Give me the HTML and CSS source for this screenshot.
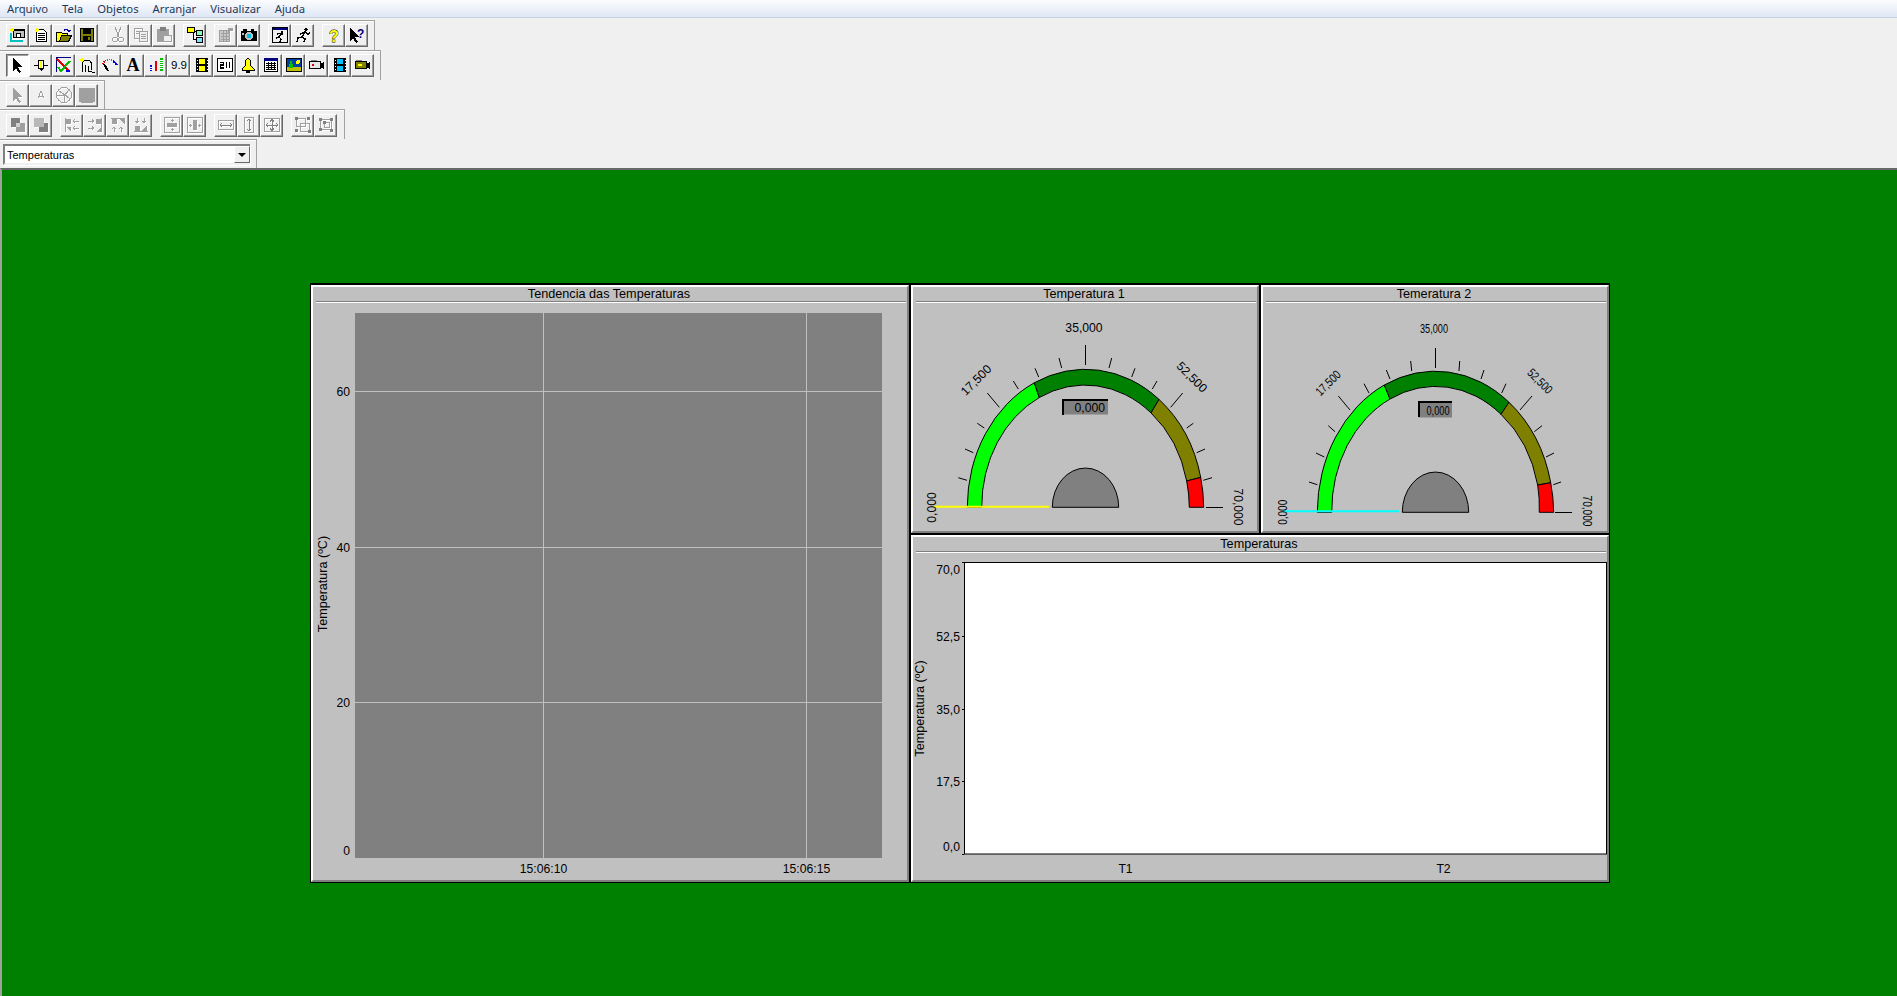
FILE: index.html
```html
<!DOCTYPE html>
<html lang="pt">
<head>
<meta charset="utf-8">
<title>Supervisório</title>
<link rel="stylesheet" href="styles.css">
</head>
<body>
<nav class="menu"><span>Arquivo</span><span>Tela</span><span>Objetos</span><span>Arranjar</span><span>Visualizar</span><span>Ajuda</span></nav>
<header class="toolbars">
  <div class="row">
    <div class="group">
      <button class="btn"><svg class="ico" viewBox="0 0 16 16"><path d="M0 6h2v7h11v2H0z" fill="#00c0c0"/><rect x="2" y="7" width="11" height="6" fill="#fff"/><rect x="3.500" y="2.500" width="11" height="8" fill="#c0c0c0" stroke="#000"/><rect x="3" y="2" width="12" height="2" fill="#000"/><rect x="6.500" y="6.500" width="4" height="4" fill="#fff" stroke="#000"/><path d="M2 0l1 2 2 1-2 1-1 2-1-2-2-1 2-1z" fill="#ffff00"/></svg></button>
      <button class="btn"><svg class="ico" viewBox="0 0 16 16"><path d="M3.500 2.500h7l3 3v9h-10z" fill="#fff" stroke="#000"/><path d="M5 6h7M5 8h7M5 10h7M5 12h7" stroke="#000"/><path d="M4 0l1 2 2 1-2 1-1 2-1-2-2-1 2-1z" fill="#ffff00"/></svg></button>
      <button class="btn"><svg class="ico" viewBox="0 0 16 16"><path d="M0.500 5.500h5l1 1h5v8h-11z" fill="#ffff00" stroke="#000"/><path d="M3.500 14.500l2-6h10l-3 6z" fill="#808000" stroke="#000"/><path d="M7 3q3-3 6 0h2l-2 3-3-3h2q-2-1-4 1z" fill="#0000a0"/></svg></button>
      <button class="btn"><svg class="ico" viewBox="0 0 16 16"><rect x="1.500" y="1.500" width="13" height="13" fill="#808000" stroke="#000"/><rect x="4" y="2" width="8" height="5" fill="#000"/><rect x="4" y="9" width="8" height="5" fill="#000"/><rect x="9" y="10" width="2" height="3" fill="#808000"/></svg></button>
    </div>
    <div class="group">
      <button class="btn"><svg class="ico dis" viewBox="0 0 16 16"><path d="M5 0l4 10M11 0L7 10" stroke="#a0a0a0" fill="none"/><circle cx="5" cy="12.500" r="2.500" fill="none" stroke="#a0a0a0"/><circle cx="11" cy="12.500" r="2.500" fill="none" stroke="#a0a0a0"/></svg></button>
      <button class="btn"><svg class="ico dis" viewBox="0 0 16 16"><rect x="1.500" y="1.500" width="8" height="10" fill="none" stroke="#a0a0a0"/><rect x="6.500" y="4.500" width="8" height="10" fill="#f0f0f0" stroke="#a0a0a0"/><path d="M8 7h5M8 9h5M8 11h5M3 4h3M3 6h3" stroke="#a0a0a0"/></svg></button>
      <button class="btn"><svg class="ico dis" viewBox="0 0 16 16"><rect x="1" y="2" width="12" height="13" fill="#a0a0a0"/><rect x="4" y="0" width="6" height="4" fill="#808080"/><rect x="7.500" y="8.500" width="8" height="6" fill="#f0f0f0" stroke="#a0a0a0"/></svg></button>
    </div>
    <div class="group">
      <button class="btn"><svg class="ico" viewBox="0 0 16 16"><path d="M7 4.500h3M6.500 5v7.500h3" stroke="#000" fill="none"/><rect x="0.500" y="0.500" width="7" height="5" fill="#ffff00" stroke="#000"/><rect x="9.500" y="3.500" width="6" height="5" fill="#80ffc0" stroke="#000"/><rect x="9.500" y="10.500" width="6" height="5" fill="#80e0ff" stroke="#000"/></svg></button>
    </div>
    <div class="group">
      <button class="btn"><svg class="ico dis" viewBox="0 0 16 16"><rect x="1.500" y="3.500" width="10" height="11" fill="#c8c8c8" stroke="#a0a0a0"/><path d="M3 6h8M3 9h8M3 12h8M5 4v10M8 4v10" stroke="#a0a0a0"/><path d="M10 1h5v3h-3v2h-2z" fill="#a0a0a0"/></svg></button>
      <button class="btn"><svg class="ico" viewBox="0 0 16 16"><rect x="0" y="4" width="16" height="10" fill="#000"/><rect x="2" y="2" width="4" height="2" fill="#000"/><rect x="10" y="2" width="3" height="2" fill="#000"/><circle cx="8" cy="9" r="4" fill="#c0c0c0"/><circle cx="8" cy="9" r="2.500" fill="#00c0e0"/><rect x="1" y="6" width="2" height="2" fill="#c0c0c0"/></svg></button>
    </div>
    <div class="group">
      <button class="btn"><svg class="ico" viewBox="0 0 16 16"><rect x="0.500" y="0.500" width="15" height="15" fill="#f0f0f0" stroke="#000"/><rect x="1" y="1" width="14" height="2" fill="#000080"/><circle cx="10" cy="5.500" r="1.200" fill="#000"/><path d="M9 7l-2 3-3 1M7 10l2 2-1 3M5 7l4-.5 2 1.500" stroke="#000" fill="none" stroke-width="1.300"/></svg></button>
      <button class="btn"><svg class="ico" viewBox="0 0 16 16"><circle cx="11" cy="2.500" r="1.700" fill="#000"/><path d="M10 5L7 10l-4 1-1 4M7 10l3 2-1 3M5 7l5-2 3 2 2-1" stroke="#000" fill="none" stroke-width="1.500"/></svg></button>
    </div>
    <div class="group">
      <button class="btn"><svg class="ico" viewBox="0 0 16 16"><text class="qmark" x="8" y="15" text-anchor="middle">?</text></svg></button>
      <button class="btn"><svg class="ico" viewBox="0 0 16 16"><path d="M1 1v13l3-3 3 5 2-1-3-5h4z" fill="#000"/><text class="qblue" x="8" y="11">?</text></svg></button>
    </div>
  </div>
  <div class="row">
    <div class="group">
      <button class="btn on"><svg class="ico" viewBox="0 0 16 16"><path d="M3 1v13l3-3 3 5 2-1-3-5h4z" fill="#000"/></svg></button>
      <button class="btn"><svg class="ico" viewBox="0 0 16 16"><path d="M1 8h14" stroke="#000"/><rect x="5.500" y="3.500" width="5" height="8" fill="#fff" stroke="#000"/><rect x="7" y="4" width="2" height="7" fill="#ffff00"/><path d="M6 12h4l-2 2z" fill="#000"/></svg></button>
      <button class="btn"><svg class="ico" viewBox="0 0 16 16"><path d="M0.500 15V0.500H15" fill="none" stroke="#000080"/><path d="M1 2l13 13" stroke="#e00000" stroke-width="2.500"/><path d="M2 10l3 4 9-10" stroke="#00c000" fill="none" stroke-width="2"/><path d="M10 14h4" stroke="#0000e0" stroke-width="2"/></svg></button>
      <button class="btn"><svg class="ico" viewBox="0 0 16 16"><path d="M3.500 15V7.500a4.500 4.500 0 0 1 9 0V13M6.500 8v7M9.500 9v5l6.500 2" fill="none" stroke="#000"/><path d="M3 0l1 2 2 1-2 1-1 2-1-2-2-1 2-1z" fill="#ffff00"/></svg></button>
      <button class="btn"><svg class="ico" viewBox="0 0 16 16"><path d="M1 7Q2 4 5 3" stroke="#e00000" fill="none" stroke-dasharray="1 1" stroke-width="1.500"/><path d="M5 3q4-1 6 1" stroke="#00c000" fill="none" stroke-dasharray="1 1" stroke-width="1.500"/><path d="M11 4q3 2 4 4" stroke="#0000e0" fill="none" stroke-width="2"/><path d="M2 7l4 7" stroke="#000" stroke-width="2"/></svg></button>
      <button class="btn"><svg class="ico" viewBox="0 0 16 16"><text class="bigA" x="8" y="14" text-anchor="middle">A</text></svg></button>
      <button class="btn"><svg class="ico" viewBox="0 0 16 16"><rect x="2" y="8" width="2" height="6" fill="#0000e0"/><rect x="7" y="4" width="2" height="10" fill="#e00000"/><rect x="12" y="1" width="3" height="13" fill="#00c000"/><path d="M2 10h2M2 12h2M12 3h3M12 5h3M12 7h3M12 9h3M12 11h3" stroke="#fff"/></svg></button>
      <button class="btn"><svg class="ico" viewBox="0 0 16 16"><text class="nine" x="8" y="12" text-anchor="middle">9.9</text></svg></button>
      <button class="btn"><svg class="ico" viewBox="0 0 16 16"><rect x="2" y="1" width="12" height="14" fill="#000"/><rect x="5" y="2" width="6" height="5" fill="#ffff00"/><rect x="5" y="9" width="6" height="5" fill="#ffff00"/><path d="M3 3v1M3 6v1M3 9v1M3 12v1M13 3v1M13 6v1M13 9v1M13 12v1" stroke="#fff"/></svg></button>
      <button class="btn"><svg class="ico" viewBox="0 0 16 16"><rect x="0.500" y="1.500" width="15" height="13" fill="#fff" stroke="#000"/><path d="M3 5.500h3.500V8H3.500v3H7M9.500 5v6M12.500 5v6" fill="none" stroke="#000" stroke-width="1.200"/></svg></button>
      <button class="btn"><svg class="ico" viewBox="0 0 16 16"><path d="M8 1l2 2 1 6 3 3v1H2v-1l3-3 1-6z" fill="#ffff00" stroke="#000"/><rect x="6" y="14" width="4" height="2" fill="#000"/></svg></button>
      <button class="btn"><svg class="ico" viewBox="0 0 16 16"><rect x="1.500" y="1.500" width="13" height="13" fill="#fff" stroke="#000"/><rect x="1" y="1" width="14" height="3" fill="#000080"/><path d="M3 6h10M3 8h10M3 10h10M3 12h10M5.500 5v8M8.500 5v8M11.500 5v8" stroke="#000"/></svg></button>
      <button class="btn"><svg class="ico" viewBox="0 0 16 16"><rect x="0.500" y="1.500" width="15" height="13" fill="#0040a0" stroke="#000"/><rect x="1" y="10" width="14" height="4" fill="#c0c000"/><circle cx="12" cy="5" r="2" fill="#ffff00"/><path d="M3 11V7h1V4h2v3h1v4z" fill="#00c000"/></svg></button>
      <button class="btn"><svg class="ico" viewBox="0 0 16 16"><rect x="0.500" y="4.500" width="11" height="7" fill="#e8e8e8" stroke="#000"/><path d="M11 7l4-2v7l-4-2z" fill="#000"/><rect x="3" y="7" width="2" height="2" fill="#e00000"/><path d="M2 3h6" stroke="#808080"/></svg></button>
      <button class="btn"><svg class="ico" viewBox="0 0 16 16"><rect x="2" y="1" width="12" height="14" fill="#000"/><rect x="5" y="2" width="6" height="5" fill="#00c0ff"/><rect x="5" y="9" width="6" height="5" fill="#00c0ff"/><path d="M3 3v1M3 6v1M3 9v1M3 12v1M13 3v1M13 6v1M13 9v1M13 12v1" stroke="#fff"/></svg></button>
      <button class="btn"><svg class="ico" viewBox="0 0 16 16"><rect x="0.500" y="4.500" width="11" height="7" fill="#808000" stroke="#000"/><path d="M11 7l4-2v7l-4-2z" fill="#000"/><rect x="3" y="7" width="4" height="2" fill="#ffff00"/><path d="M1 3h6" stroke="#808080"/></svg></button>
    </div>
  </div>
  <div class="row row-3">
    <div class="group">
      <button class="btn"><svg class="ico dis" viewBox="0 0 16 16"><path d="M3 1v13l3-3 3 5 2-1-3-5h4z" fill="#a0a0a0"/></svg></button>
      <button class="btn"><svg class="ico dis" viewBox="0 0 16 16"><path d="M5 11l3-7 3 7M6 9h4" stroke="#a0a0a0" fill="none"/></svg></button>
      <button class="btn"><svg class="ico dis" viewBox="0 0 16 16"><circle cx="8" cy="8" r="7.500" fill="none" stroke="#a0a0a0"/><path d="M3 4l6 4-1 7M13 3L8 9 1 8M14 12L8 7" stroke="#a0a0a0" fill="none"/></svg></button>
      <button class="btn"><svg class="ico" viewBox="0 0 16 16"><rect x="0" y="0.500" width="16" height="15" rx="2" fill="#a0a0a0"/></svg></button>
    </div>
  </div>
  <div class="row row-4">
    <div class="group">
      <button class="btn"><svg class="ico dis" viewBox="0 0 16 16"><rect x="1" y="1" width="9" height="9" fill="#808080"/><rect x="6" y="6" width="9" height="9" fill="#a0a0a0"/><rect x="6" y="6" width="4" height="4" fill="#d0d0d0"/></svg></button>
      <button class="btn"><svg class="ico dis" viewBox="0 0 16 16"><rect x="6" y="6" width="9" height="9" fill="#808080"/><rect x="1" y="1" width="10" height="9" fill="#b8b8b8"/></svg></button>
    </div>
    <div class="group">
      <button class="btn"><svg class="ico dis" viewBox="0 0 16 16"><path d="M1.500 1v14" stroke="#a0a0a0"/><path d="M2 2h5v5H2zM2 10l5 0v5z" fill="#a0a0a0"/><path d="M9 4h6M9 11h6M11 2.500L9 4l2 1.500M11 9.500L9 11l2 1.500" stroke="#a0a0a0" fill="none"/></svg></button>
      <button class="btn"><svg class="ico dis" viewBox="0 0 16 16"><path d="M14.500 1v14" stroke="#a0a0a0"/><path d="M9 2h5v5H9zM14 10v5H9z" fill="#a0a0a0"/><path d="M1 4h6M1 11h6M5 2.500L7 4 5 5.500M5 9.500L7 11l-2 1.500" stroke="#a0a0a0" fill="none"/></svg></button>
      <button class="btn"><svg class="ico dis" viewBox="0 0 16 16"><path d="M1 1.500h14" stroke="#a0a0a0"/><path d="M2 2h5v5H2zM9 2h6l0 6z" fill="#a0a0a0"/><path d="M4 10v5M11 10v5M2.500 12L4 10l1.500 2M9.500 12L11 10l1.500 2" stroke="#a0a0a0" fill="none"/></svg></button>
      <button class="btn"><svg class="ico dis" viewBox="0 0 16 16"><path d="M1 14.500h14" stroke="#a0a0a0"/><path d="M2 9h5v5H2zM14 8v6H8z" fill="#a0a0a0"/><path d="M4 1v5M11 1v5M2.500 4L4 6l1.500-2M9.500 4L11 6l1.500-2" stroke="#a0a0a0" fill="none"/></svg></button>
    </div>
    <div class="group">
      <button class="btn"><svg class="ico dis" viewBox="0 0 16 16"><rect x="0.500" y="0.500" width="15" height="15" fill="none" stroke="#a0a0a0"/><rect x="3" y="6" width="10" height="4" fill="#a0a0a0"/><path d="M8 2v3M8 11v3M6.500 3.500h3M6.500 12.500h3" stroke="#a0a0a0"/></svg></button>
      <button class="btn"><svg class="ico dis" viewBox="0 0 16 16"><rect x="0.500" y="0.500" width="15" height="15" fill="none" stroke="#a0a0a0"/><rect x="6" y="3" width="4" height="10" fill="#a0a0a0"/><path d="M2 8h3M11 8h3M3.500 6.500v3M12.500 6.500v3" stroke="#a0a0a0"/></svg></button>
    </div>
    <div class="group">
      <button class="btn"><svg class="ico dis" viewBox="0 0 16 16"><rect x="0.500" y="3.500" width="15" height="9" fill="none" stroke="#a0a0a0"/><path d="M2 8h12M4 6L2 8l2 2M12 6l2 2-2 2" stroke="#808080" fill="none"/></svg></button>
      <button class="btn"><svg class="ico dis" viewBox="0 0 16 16"><rect x="3.500" y="0.500" width="9" height="15" fill="none" stroke="#a0a0a0"/><path d="M8 2v12M6 4l2-2 2 2M6 12l2 2 2-2" stroke="#808080" fill="none"/></svg></button>
      <button class="btn"><svg class="ico dis" viewBox="0 0 16 16"><rect x="0.500" y="1.500" width="15" height="13" fill="none" stroke="#a0a0a0"/><path d="M2 8h12M8 2.500v11M4 6L2 8l2 2M12 6l2 2-2 2M6 4.500l2-2 2 2M6 11.500l2 2 2-2" stroke="#808080" fill="none"/></svg></button>
    </div>
    <div class="group">
      <button class="btn"><svg class="ico dis" viewBox="0 0 16 16"><rect x="1.500" y="1.500" width="9" height="8" fill="none" stroke="#a0a0a0"/><rect x="5.500" y="6.500" width="9" height="8" fill="none" stroke="#a0a0a0"/><path d="M0 0h3v3H0zM12 0h3v3h-3zM0 12h3v3H0zM13 13h3v3h-3z" fill="#808080"/></svg></button>
      <button class="btn"><svg class="ico dis" viewBox="0 0 16 16"><rect x="2.500" y="2.500" width="11" height="10" fill="none" stroke="#a0a0a0"/><rect x="6.500" y="5.500" width="5" height="5" fill="none" stroke="#a0a0a0"/><path d="M1 1h3v3H1zM12 1h3v3h-3zM1 11h3v3H1zM12 12h3v3h-3zM5 4h3v3H5z" fill="#808080"/></svg></button>
    </div>
  </div>
  <div class="row row-5">
    <div class="combo"><span class="combo-text">Temperaturas</span><span class="combo-btn"><i class="caret"></i></span></div>
  </div>
</header>
<main class="desktop">
  <div class="dash">
    <section class="panel panel-trend">
      <div class="bevel">
        <h2 class="title">Tendencia das Temperaturas</h2>
        <svg class="plot" viewBox="313 303 594 577">
          <rect x="355" y="313" width="527" height="545" fill="#808080"/>
          <path class="grid" d="M355 391.500H882M355 547.500H882M355 702.500H882M543.500 313V858M806.500 313V858"/>
          <text class="lbl end" x="350" y="396">60</text>
          <text class="lbl end" x="350" y="552">40</text>
          <text class="lbl end" x="350" y="707">20</text>
          <text class="lbl end" x="350" y="855">0</text>
          <text class="lbl axis mid" transform="translate(327 584) rotate(-90)" x="0" y="0">Temperatura (ºC)</text>
          <text class="lbl mid" x="543.500" y="873">15:06:10</text>
          <text class="lbl mid" x="806.500" y="873">15:06:15</text>
        </svg>
      </div>
    </section>
    <section class="panel">
      <div class="bevel">
        <h2 class="title">Temperatura 1</h2>
        <svg class="plot" viewBox="913 303 344 228">
          <path class="tick" d="M958.300 477.700L967 480.300M965 449L973.300 452.700M977.300 423.300L984.300 428M1013.300 381L1018.300 389M1035 368.300L1038.700 377M1059 358L1061.700 368M1109 368L1111.700 358M1131.700 377L1135 368.300M1152.300 389L1157 381M1186.700 428L1193.300 423.300M1196.700 452.700L1205 449M1203.300 480.300L1212 477.700M1206 507.500H1223M987.300 393L999.300 407.300M1085.500 345V365M1182.700 393L1170.700 407.300"/>
          <path class="band" fill="#00ff00" d="M967.300 507.300A118.200 138 0 0 1 1034.300 382.800L1039.300 397.500A103.800 122 0 0 0 981.700 507.300Z"/>
          <path class="band" fill="#008000" d="M1034.300 382.800A118.200 138 0 0 1 1159 399.400L1151 412.900A103.800 122 0 0 0 1039.300 397.500Z"/>
          <path class="band" fill="#808000" d="M1159 399.400A118.200 138 0 0 1 1200.700 477.400L1186.700 481A103.800 122 0 0 0 1151 412.900Z"/>
          <path class="band" fill="#ff0000" d="M1200.700 477.400A118.200 138 0 0 1 1203.700 507.300H1189.300A103.800 122 0 0 0 1186.700 481Z"/>
          <path class="hub" d="M1052.300 507.300A33 39 0 0 1 1118.700 507.300Z"/>
          <path class="needle-y" d="M933.700 506.700H1049"/>
          <rect class="lcd" x="1062.500" y="399.500" width="45.500" height="15"/>
          <path class="lcd-edge" d="M1063 415V400H1108"/>
          <text class="lbl end" x="1105" y="412">0,000</text>
          <text class="lbl mid" x="1084" y="332">35,000</text>
          <text class="lbl mid" transform="translate(979 383) rotate(-45)" x="0" y="0">17,500</text>
          <text class="lbl mid" transform="translate(1189 380) rotate(45)" x="0" y="0">52,500</text>
          <text class="lbl mid" transform="translate(936 507.500) rotate(-90)" x="0" y="0">0,000</text>
          <text class="lbl mid" transform="translate(1233.500 507) rotate(90)" x="0" y="0">70,000</text>
        </svg>
      </div>
    </section>
    <section class="panel">
      <div class="bevel">
        <h2 class="title">Temeratura 2</h2>
        <svg class="plot" viewBox="1263 303 344 228">
          <path class="tick" d="M1309 482L1317.300 484.700M1316 453L1324.300 457M1328.300 425.700L1335 431.700M1364 383.700L1369 393M1386.300 370L1390 379M1410.700 361L1411.700 371M1459 371L1459.700 361M1481 379L1484 370M1501.700 393L1506 383.700M1534.300 431.700L1542 425.700M1546 457L1554 453M1553.300 484.700L1561 482M1555 512.500H1572M1338.300 396L1350 410M1435.500 348V368M1532 396L1520 410"/>
          <path class="band" fill="#00ff00" d="M1317.300 512.300A118.200 142 0 0 1 1384.300 385L1390 399A103.800 124.700 0 0 0 1331.700 512.300Z"/>
          <path class="band" fill="#008000" d="M1384.300 385A118.200 142 0 0 1 1509 402.300L1501 414.300A103.800 124.700 0 0 0 1390 399Z"/>
          <path class="band" fill="#808000" d="M1509 402.300A118.200 142 0 0 1 1550.700 482.700L1537.700 485A103.800 124.700 0 0 0 1501 414.300Z"/>
          <path class="band" fill="#ff0000" d="M1550.700 482.700A118.200 142 0 0 1 1553.700 512.300H1539.300A103.800 124.700 0 0 0 1537.700 485Z"/>
          <path class="hub" d="M1402.300 512.300A33 40 0 0 1 1468.700 512.300Z"/>
          <path class="needle-c" d="M1283.700 511.300H1399"/>
          <rect class="lcd" x="1418.500" y="401.500" width="33.500" height="16"/>
          <path class="lcd-edge" d="M1419 417V402H1452"/>
          <text class="lbl end" x="1449.500" y="414.500" textLength="23" lengthAdjust="spacingAndGlyphs">0,000</text>
          <text class="lbl mid" x="1434" y="333" textLength="28" lengthAdjust="spacingAndGlyphs">35,000</text>
          <text class="lbl mid" transform="translate(1331 386) rotate(-45)" x="0" y="0" textLength="30" lengthAdjust="spacingAndGlyphs">17,500</text>
          <text class="lbl mid" transform="translate(1537 384) rotate(45)" x="0" y="0" textLength="30" lengthAdjust="spacingAndGlyphs">52,500</text>
          <text class="lbl mid" transform="translate(1287 512.300) rotate(-90)" x="0" y="0" textLength="25" lengthAdjust="spacingAndGlyphs">0,000</text>
          <text class="lbl mid" transform="translate(1583 511) rotate(90)" x="0" y="0" textLength="31" lengthAdjust="spacingAndGlyphs">70,000</text>
        </svg>
      </div>
    </section>
    <section class="panel panel-bars">
      <div class="bevel">
        <h2 class="title">Temperaturas</h2>
        <svg class="plot" viewBox="913 553 694 327">
          <rect class="bar-area" x="964.500" y="562.500" width="642" height="291.500"/>
          <path class="tick" d="M962 562.500H964M962 636.500H964M962 709.500H964M962 781.500H964M962 854.500H964"/>
          <text class="lbl end" x="960" y="574">70,0</text>
          <text class="lbl end" x="960" y="641">52,5</text>
          <text class="lbl end" x="960" y="714">35,0</text>
          <text class="lbl end" x="960" y="786">17,5</text>
          <text class="lbl end" x="960" y="851">0,0</text>
          <text class="lbl axis mid" transform="translate(924 708.500) rotate(-90)" x="0" y="0">Temperatura (ºC)</text>
          <text class="lbl mid" x="1125.500" y="873">T1</text>
          <text class="lbl mid" x="1443.500" y="873">T2</text>
        </svg>
      </div>
    </section>
  </div>
</main>
</body>
</html>
```

FILE: styles.css
```css
* { box-sizing: border-box; }
html, body { height: 100%; }
body {
  margin: 0;
  display: flex;
  flex-direction: column;
  overflow: hidden;
  background: #f0f0f0;
  font-family: "Liberation Sans", Arial, sans-serif;
  font-size: 12px;
  color: #000;
}

/* menu */
.menu {
  height: 18px;
  display: flex;
  gap: 14px;
  padding: 0 7px;
  align-items: center;
  font-family: "Noto Sans", sans-serif;
  font-size: 11.300px;
  color: #1e395b;
  background: linear-gradient(#fbfcfe, #dfe7f5);
  border-bottom: 1px solid #c9d2e0;
}

/* toolbars */
.toolbars { padding-top: 2px; height: 150px; flex: none; }
.row {
  width: fit-content;
  display: flex;
  gap: 8px;
  padding: 3px 6px;
  border-top: 1px solid #a0a0a0;
  border-bottom: 0;
  border-right: 1px solid #a0a0a0;
  box-shadow: inset 0 1px 0 #fff;
}
.row-3 { width: 105px; padding-bottom: 2px; }
.row-4 { width: 345px; padding-top: 4px; padding-bottom: 2px; }
.row-5 { width: 257px; padding: 4px 0 3px 3px; height: 29px; }
.group { display: flex; }
.btn {
  width: 23px;
  height: 23px;
  padding: 0 0 2px;
  display: flex;
  align-items: center;
  justify-content: center;
  background: #f0f0f0;
  border: 1px solid;
  border-color: #fff #696969 #696969 #fff;
  box-shadow: inset -1px -1px 0 #a0a0a0;
  border-radius: 0;
}
.btn.on {
  background: #fcfcfc;
  border-color: #696969 #fff #fff #696969;
  box-shadow: inset 1px 1px 0 #a0a0a0;
}
.ico { width: 16px; height: 16px; display: block; flex: none; shape-rendering: crispEdges; overflow: visible; }
.dis { filter: drop-shadow(1px 1px 0 #fff); }
.qmark { font: bold 16px "Liberation Sans", sans-serif; fill: #ffff00; stroke: #000; stroke-width: 0.800px; paint-order: stroke; }
.qblue { font: bold 12px "Liberation Sans", sans-serif; fill: #000080; }
.bigA { font: bold 18px "Liberation Serif", serif; fill: #000; }
.nine { font: 11.500px "Liberation Sans", sans-serif; fill: #000; }

/* combo */
.combo {
  width: 247px;
  height: 21px;
  display: flex;
  align-items: center;
  justify-content: space-between;
  background: #fff;
  border: 2px solid;
  border-color: #808080 #808080 #f0f0f0 #808080;
  border-right-width: 0;
  box-shadow: 1px 1px 0 #fff;
}
.combo-text { padding-left: 2px; font-size: 11px; }
.combo-btn {
  width: 16px;
  height: 17px;
  display: flex;
  align-items: center;
  justify-content: center;
  background: #f0f0f0;
  border: 1px solid;
  border-color: #fff #696969 #696969 #fff;
}
.caret { width: 0; height: 0; border: 4px solid transparent; border-top: 4px solid #000; border-bottom: 0; }

/* desktop */
.desktop {
  flex: 1;
  background: #008000;
  border-top: 2px solid #696969;
  border-left: 2px solid #a0a0a0;
  padding: 113px 0 0 308px;
}
.dash {
  width: 1300px;
  display: grid;
  grid-template-columns: 600px 350px 350px;
  grid-template-rows: 250px 349px;
  border-top: 1px solid #000;
}
.panel { border: 1px solid #000; background: #c0c0c0; min-width: 0; }
.panel-trend { grid-row: 1 / span 2; }
.panel-bars { grid-column: 2 / span 2; }
.bevel {
  height: 100%;
  display: flex;
  flex-direction: column;
  border: 2px solid;
  border-color: #fff #808080 #808080 #fff;
}
.title {
  margin: 0 1px 2px 3px;
  padding-right: 4px;
  height: 14px;
  line-height: 14px;
  font-size: 12.670px;
  font-weight: normal;
  text-align: center;
  color: #000;
}
.title::after {
  content: "";
  display: block;
  height: 2px;
  margin: 0 -4px 0 0;
  background: linear-gradient(#808080 50%, #fff 50%);
}
.plot { display: block; flex: 1; min-height: 0; width: 100%; }

/* chart parts */
.grid { stroke: #c0c0c0; fill: none; }
.lbl { font: 12.200px "Liberation Sans", Arial, sans-serif; fill: #000; }
.axis { font-size: 12.600px; }
.end { text-anchor: end; }
.mid { text-anchor: middle; }
.tick { stroke: #000; fill: none; }
.band { stroke: #000; }
.hub { fill: #808080; stroke: #000; }
.needle-y { stroke: #ffff00; stroke-width: 2; fill: none; }
.needle-c { stroke: #00ffff; stroke-width: 2; fill: none; }
.lcd { fill: #808080; }
.lcd-edge { stroke: #000; stroke-width: 2; fill: none; }
.bar-area { fill: #fff; stroke: #000; }
```
